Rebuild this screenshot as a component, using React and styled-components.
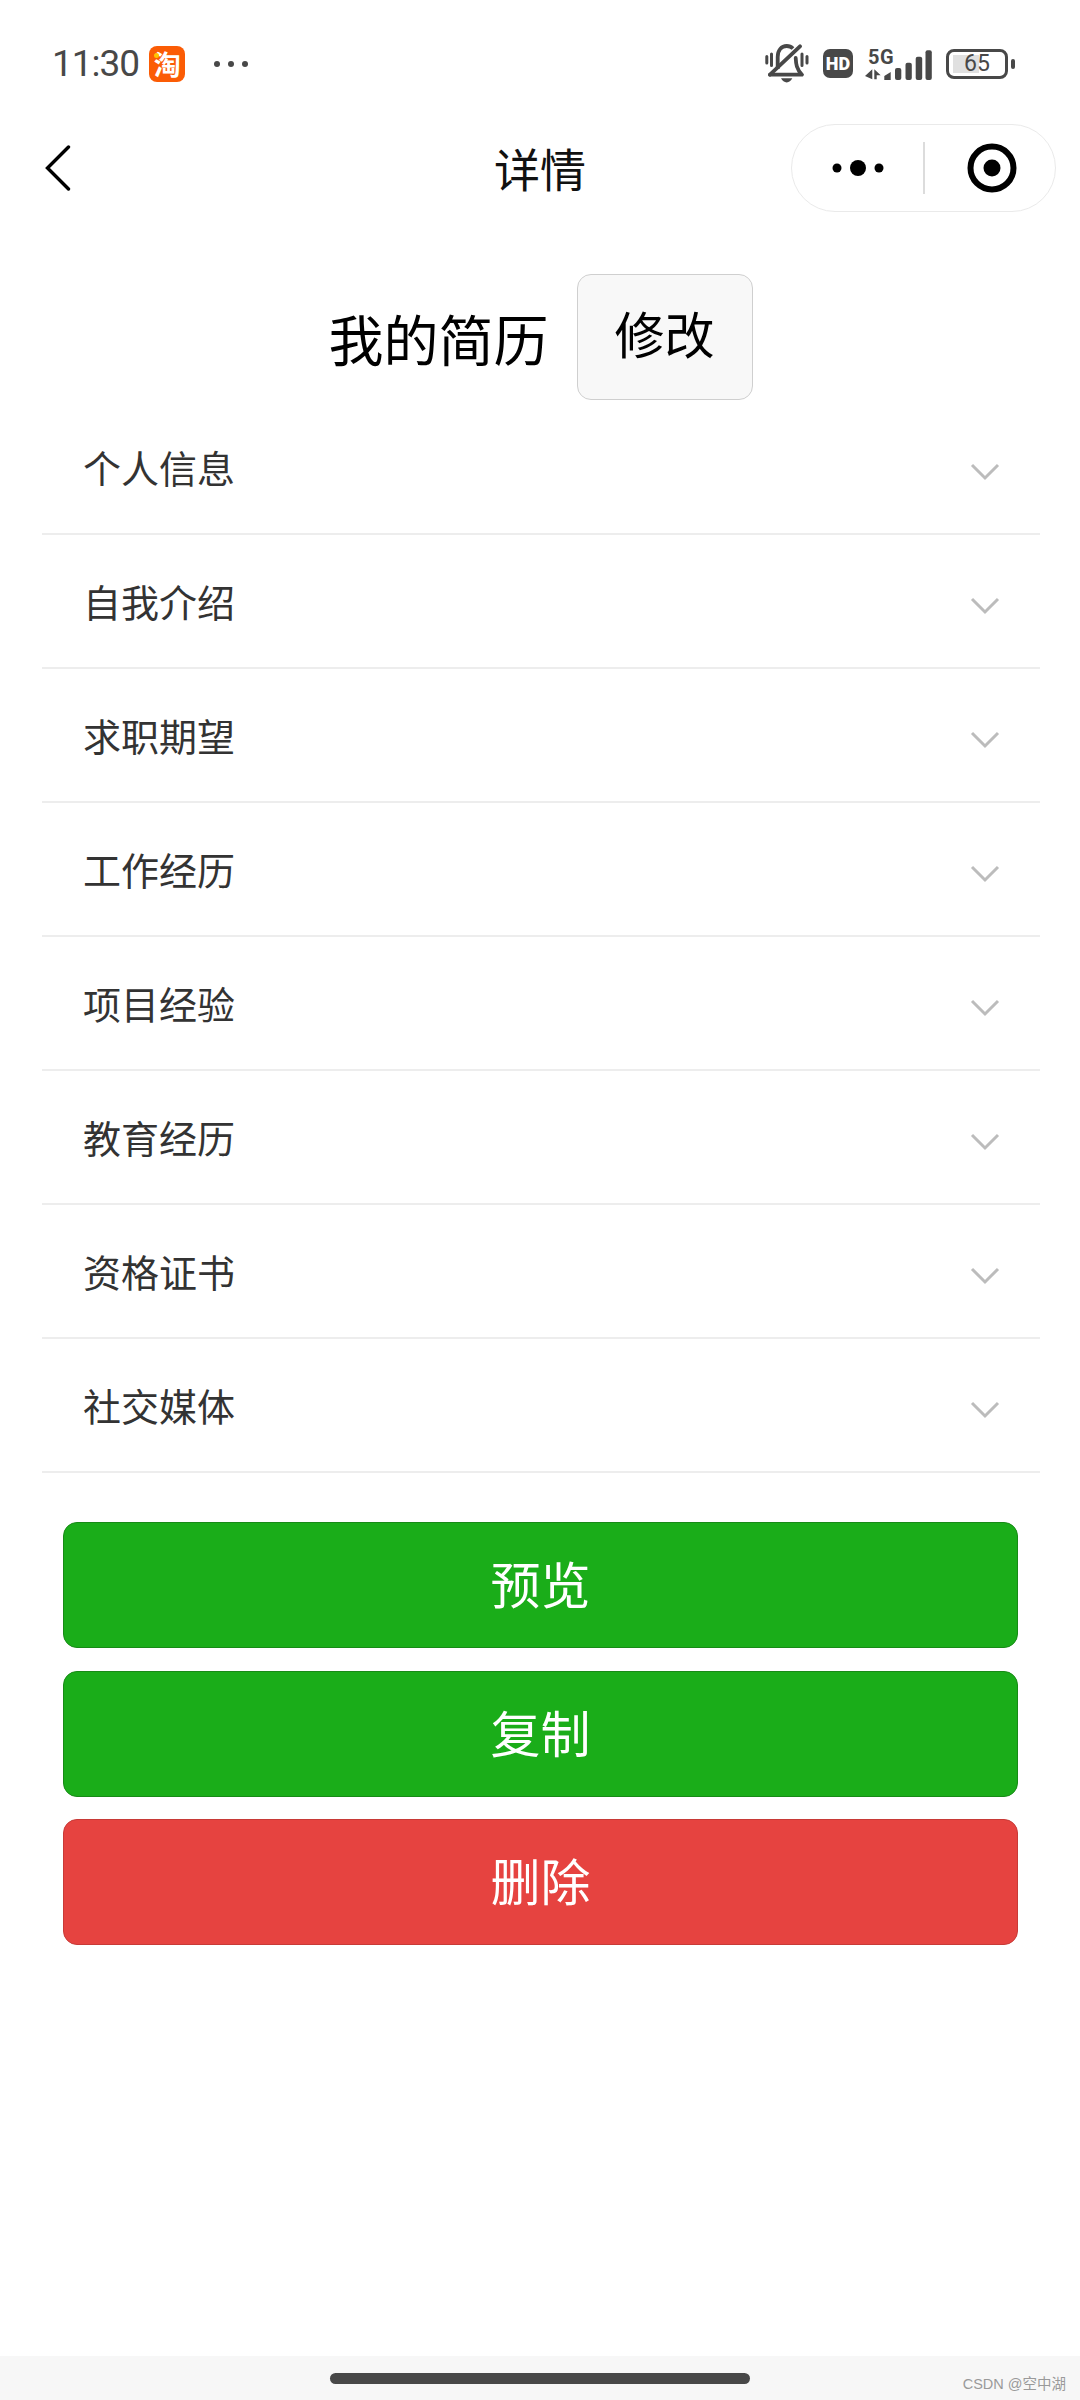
import React from "react";
import styled, { createGlobalStyle } from "styled-components";

const GlobalStyle = createGlobalStyle`
    html, body {
        margin: 0;
        padding: 0;
        background: #fff;
    }
    body {
        font-family: "Noto Sans CJK SC", "Noto Sans", sans-serif;
    }
    * {
        box-sizing: border-box;
    }
`;

const SECTIONS = ["个人信息", "自我介绍", "求职期望", "工作经历", "项目经验", "教育经历", "资格证书", "社交媒体"];

const App = () => {
    return (
        <Page>
            <GlobalStyle />
            <StatusBar>
                <StatusLeft>
                    <Time>11:30</Time>
                    <TaobaoBadge>淘</TaobaoBadge>
                    <MoreDots>
                        <i /><i /><i />
                    </MoreDots>
                </StatusLeft>
                <StatusRight>
                    <MuteIcon />
                    <HdBadge>HD</HdBadge>
                    <Signal>
                        <SignalLabel>5G</SignalLabel>
                        <SignalIcon />
                    </Signal>
                    <Battery>
                        <BatteryLevel />
                        <BatteryText>65</BatteryText>
                    </Battery>
                    <BatteryNub />
                </StatusRight>
            </StatusBar>

            <NavBar>
                <BackButton>
                    <svg width="26" height="46" viewBox="0 0 26 46" fill="none">
                        <path d="M23.5 2 L2.5 23 L23.5 44" stroke="#000" strokeWidth="3.4" strokeLinecap="round" strokeLinejoin="miter" />
                    </svg>
                </BackButton>
                <NavTitle>详情</NavTitle>
                <Capsule>
                    <MenuPart>
                        <svg width="52" height="18" viewBox="0 0 52 18">
                            <circle cx="5" cy="9" r="4.5" fill="#000" />
                            <circle cx="26" cy="9" r="8" fill="#000" />
                            <circle cx="47" cy="9" r="4.5" fill="#000" />
                        </svg>
                    </MenuPart>
                    <CapsuleDivider />
                    <ClosePart>
                        <svg width="50" height="50" viewBox="0 0 50 50" fill="none">
                            <circle cx="25" cy="25" r="21.5" stroke="#000" strokeWidth="6" />
                            <circle cx="25" cy="25" r="8.5" fill="#000" />
                        </svg>
                    </ClosePart>
                </Capsule>
            </NavBar>

            <Header>
                <Heading>我的简历</Heading>
                <EditButton>修改</EditButton>
            </Header>

            <SectionList>
                {SECTIONS.map((title) => (
                    <SectionRow key={title}>
                        <SectionTitle>{title}</SectionTitle>
                        <Chevron width="30" height="18" viewBox="0 0 30 18" fill="none">
                            <path d="M2 2 L15 15 L28 2" stroke="#bcbcbc" strokeWidth="3" />
                        </Chevron>
                    </SectionRow>
                ))}
            </SectionList>

            <Actions>
                <ActionButton>预览</ActionButton>
                <ActionButton>复制</ActionButton>
                <ActionButton $danger>删除</ActionButton>
            </Actions>

            <HomeArea>
                <HomeBar />
                <Watermark>CSDN @空中湖</Watermark>
            </HomeArea>
        </Page>
    );
};

const MuteIcon = () => (
    <svg width="46" height="40" viewBox="0 0 46 40" fill="none">
        <path d="M12.7 25 V13 C12.7 6 16.5 2 21.7 2 C24.5 2 26.5 3 28 4.5" stroke="#484848" strokeWidth="3.8" />
        <path d="M30.7 14 C31 20 31.5 25 37 30.7 H5" stroke="#484848" strokeWidth="3.8" strokeLinecap="round" strokeLinejoin="round" />
        <path d="M16 34.3 H27.3 C26 37 24 38.4 21.7 38.4 C19.4 38.4 17.3 37 16 34.3 Z" fill="#484848" />
        <path d="M5 30.7 L35 2.3" stroke="#484848" strokeWidth="3.8" strokeLinecap="round" />
        <path d="M1.8 12.5 V19 M6.5 10 V21.5 M37 10 V21.5 M42 12.5 V19" stroke="#484848" strokeWidth="3" strokeLinecap="round" />
    </svg>
);

const SignalIcon = () => (
    <svg width="67" height="34" viewBox="0 0 67 34" fill="#484848">
        <path d="M0 29 L7.3 22.3 V32.3 Z M9.3 22.3 L15.7 28.3 H11.7 V32.3 H9.3 Z" />
        <path d="M19.3 33 V29 L25.7 25 V33 Z" />
        <rect x="30" y="21" width="6.3" height="12" rx="2" />
        <rect x="40.5" y="15.7" width="6.3" height="17.3" rx="2" />
        <rect x="50.7" y="9.7" width="6.5" height="23.3" rx="2" />
        <rect x="60.5" y="3.3" width="6.3" height="29.7" rx="2" />
    </svg>
);

const Page = styled.div`
    display: flex;
    flex-direction: column;
    width: 1080px;
    min-height: 2400px;
    background: #fff;
`;

const StatusBar = styled.div`
    display: flex;
    align-items: center;
    justify-content: space-between;
    height: 124px;
    padding: 3px 65px 0 52px;
`;

const StatusLeft = styled.div`
    display: flex;
    align-items: center;
`;

const Time = styled.span`
    font-family: Roboto, sans-serif;
    font-size: 37px;
    letter-spacing: -1px;
    line-height: 44px;
    color: #484848;
`;

const TaobaoBadge = styled.span`
    position: relative;
    display: flex;
    align-items: center;
    justify-content: center;
    width: 36px;
    height: 36px;
    margin-left: 10px;
    border-radius: 8px;
    background: #fb5c05;
    color: #fff;
    font-size: 27px;
    font-weight: 700;
    line-height: 1;
    &::before {
        content: "";
        position: absolute;
        top: 7px;
        left: 5px;
        width: 5px;
        height: 5px;
        border-radius: 50%;
        background: #ffc400;
    }
`;

const MoreDots = styled.span`
    display: flex;
    gap: 8px;
    margin-left: 29px;
    i {
        width: 6px;
        height: 6px;
        border-radius: 50%;
        background: #484848;
    }
`;

const StatusRight = styled.div`
    display: flex;
    align-items: center;
`;

const HdBadge = styled.span`
    display: flex;
    align-items: center;
    justify-content: center;
    width: 30px;
    height: 29px;
    margin: 0 12px;
    border-radius: 7px;
    background: #484848;
    color: #fff;
    font-family: Roboto, sans-serif;
    font-size: 18px;
    font-weight: 900;
`;

const Signal = styled.span`
    position: relative;
    display: flex;
`;

const SignalLabel = styled.span`
    position: absolute;
    top: -2px;
    left: 3px;
    font-family: Roboto, sans-serif;
    font-size: 20px;
    font-weight: 700;
    letter-spacing: 0.5px;
    line-height: 24px;
    color: #484848;
`;

const Battery = styled.span`
    position: relative;
    display: flex;
    align-items: center;
    justify-content: center;
    width: 62px;
    height: 30px;
    margin-left: 14px;
    border: 3px solid #484848;
    border-radius: 8px;
`;

const BatteryLevel = styled.span`
    position: absolute;
    top: 3px;
    bottom: 3px;
    left: 4px;
    width: 26px;
    background: #e0e0e0;
`;

const BatteryText = styled.span`
    position: relative;
    font-family: Roboto, sans-serif;
    font-size: 23px;
    line-height: 1;
    color: #484848;
`;

const BatteryNub = styled.span`
    width: 4px;
    height: 10px;
    margin-left: 3px;
    border-radius: 2px;
    background: #484848;
`;

const NavBar = styled.div`
    position: relative;
    display: flex;
    align-items: center;
    justify-content: space-between;
    height: 88px;
    padding: 0 24px 0 45px;
`;

const BackButton = styled.div`
    display: flex;
    align-items: center;
`;

const NavTitle = styled.h1`
    position: absolute;
    left: 0;
    right: 0;
    margin: 0 0 2px;
    text-align: center;
    font-size: 46px;
    font-weight: 400;
    line-height: 60px;
    color: #111;
    pointer-events: none;
`;

const Capsule = styled.div`
    display: flex;
    align-items: center;
    width: 265px;
    height: 88px;
    border: 1.5px solid #eaeaea;
    border-radius: 44px;
`;

const MenuPart = styled.div`
    display: flex;
    align-items: center;
    justify-content: center;
    width: 131px;
`;

const ClosePart = styled.div`
    flex: 1;
    display: flex;
    align-items: center;
    justify-content: center;
    padding-left: 4px;
`;

const CapsuleDivider = styled.div`
    width: 1.5px;
    height: 52px;
    background: #dcdcdc;
`;

const Header = styled.div`
    display: flex;
    align-items: center;
    justify-content: center;
    gap: 28px;
    margin-top: 62px;
    padding-left: 1px;
`;

const Heading = styled.h2`
    margin: 0;
    font-size: 55px;
    font-weight: 400;
    line-height: 74px;
    color: #000;
`;

const EditButton = styled.button`
    width: 176px;
    height: 126px;
    padding: 0 0 10px;
    border: 1.5px solid #cfcfcf;
    border-radius: 14px;
    background: #f8f8f8;
    font-family: inherit;
    font-size: 50px;
    color: #000;
`;

const SectionList = styled.div`
    display: flex;
    flex-direction: column;
    margin: 1px 40px 0 42px;
`;

const SectionRow = styled.div`
    display: flex;
    align-items: center;
    justify-content: space-between;
    height: 134px;
    padding: 0 40px 0 41px;
    border-bottom: 2px solid #ededed;
`;

const SectionTitle = styled.span`
    font-size: 38px;
    line-height: 52px;
    color: #333;
`;

const Chevron = styled.svg`
    margin-top: 9px;
`;

const Actions = styled.div`
    display: flex;
    flex-direction: column;
    gap: 22.5px;
    margin: 49px 62px 0 63px;
`;

const ActionButton = styled.button`
    height: 126px;
    padding: 0 0 6px;
    border: 1.5px solid ${(props) => (props.$danger ? "#c83a37" : "#178a16")};
    border-radius: 14px;
    background: ${(props) => (props.$danger ? "#e64340" : "#1aad19")};
    font-family: inherit;
    font-size: 50px;
    color: #fff;
`;

const HomeArea = styled.div`
    position: relative;
    display: flex;
    justify-content: center;
    height: 44px;
    margin-top: auto;
    padding-top: 17px;
    background: #f7f7f7;
`;

const HomeBar = styled.div`
    width: 420px;
    height: 11px;
    border-radius: 6px;
    background: #484848;
`;

const Watermark = styled.span`
    position: absolute;
    right: 14px;
    bottom: 7px;
    font-family: "Liberation Sans", "Noto Sans CJK SC", sans-serif;
    font-size: 14.5px;
    line-height: 18px;
    color: #9a9a9a;
`;

export default App;
